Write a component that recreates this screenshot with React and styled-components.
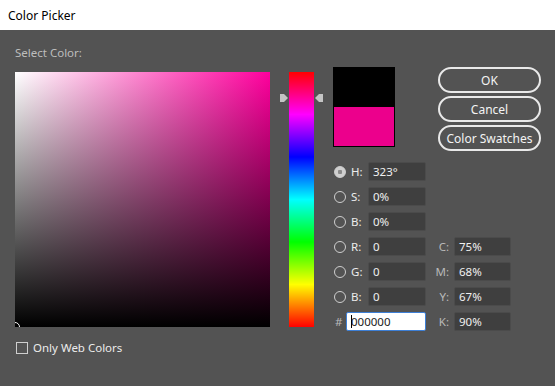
import styled, { createGlobalStyle } from 'styled-components';

const Global = createGlobalStyle`
  html, body { margin: 0; padding: 0; background: #535353; }
  body { font-family: "Noto Sans", "Open Sans", sans-serif; font-size: 11.5px; }
`;

const Window = styled.div`
  width: 555px;
  height: 386px;
  display: flex;
  flex-direction: column;
  background: #535353;
  overflow: hidden;
`;

const TitleBar = styled.div`
  height: 30px;
  flex: none;
  background: #ffffff;
  color: #000;
  display: flex;
  align-items: center;
  padding-left: 8px;
  font-size: 12px;
`;

const Body = styled.div`
  display: flex;
  padding: 0 0 0 15px;
`;

const LeftCol = styled.div`
  width: 255px;
  display: flex;
  flex-direction: column;
`;

const SectionLabel = styled.div`
  color: #bdbdbd;
  height: 42px;
  line-height: 45px;
`;

const Field = styled.div`
  position: relative;
  width: 255px;
  height: 255px;
  overflow: hidden;
  background:
    linear-gradient(to bottom, rgba(0,0,0,0), #000),
    linear-gradient(to right, #fff, ${p => p.$hue});
`;

const Marker = styled.div`
  position: absolute;
  left: -5px;
  bottom: -5px;
  width: 8px;
  height: 8px;
  border-radius: 50%;
  border: 1px solid #fff;
  box-shadow: 0 0 0 1px #000 inset;
`;

const CheckRow = styled.label`
  display: flex;
  align-items: center;
  gap: 5px;
  margin-top: 13px;
  margin-left: 1px;
  color: #ececec;
`;

const CheckBox = styled.span`
  width: 10px;
  height: 10px;
  border: 1px solid #cfcfcf;
`;

const HueCol = styled.div`
  position: relative;
  margin-left: 19px;
  margin-top: 42px;
  width: 25px;
  height: 255px;
  background: linear-gradient(to bottom,
    #ff0000 0%, #ff00ff 16.67%, #0000ff 33.33%, #00ffff 50%,
    #00ff00 66.67%, #ffff00 83.33%, #ff0000 100%);
`;

const Arrow = styled.div`
  position: absolute;
  ${p => (p.$side === 'left' ? 'left: -9px;' : 'right: -9px;')}
  width: 8px;
  height: 8px;
  background: #c4c4c4;
  clip-path: ${p => (p.$side === 'left'
    ? 'polygon(0 0, 50% 0, 100% 50%, 50% 100%, 0 100%)'
    : 'polygon(50% 0, 100% 0, 100% 100%, 50% 100%, 0 50%)')};
`;

const RightArea = styled.div`
  margin-left: 19px;
  margin-top: 37px;
  display: flex;
  flex-direction: column;
`;

const TopRow = styled.div`
  display: flex;
`;

const Swatch = styled.div`
  width: 60px;
  height: 78px;
  border: 1px solid #000;
  display: flex;
  flex-direction: column;
`;

const SwatchHalf = styled.div`
  height: 39px;
  background: ${p => p.$color};
`;

const Buttons = styled.div`
  margin-left: 43px;
  display: flex;
  flex-direction: column;
  gap: 3px;
`;

const Button = styled.button`
  width: 103px;
  height: 26px;
  box-sizing: border-box;
  border: 2px solid #e9e9e9;
  border-radius: 13px;
  background: #535353;
  color: #f4f4f4;
  font-family: inherit;
  font-size: 12px;
  padding: 0;
`;

const Grid = styled.div`
  margin-top: 11px;
  display: grid;
  grid-template-columns: 14px 21px 58px 28px 57px;
  grid-auto-rows: 19px;
  row-gap: 6px;
  align-items: center;
`;

const Radio = styled.span`
  width: 10px;
  height: 10px;
  border-radius: 50%;
  border: 1px solid #cfcfcf;
  margin-left: 1px;
  box-sizing: content-box;
  background: ${p => (p.$on ? 'radial-gradient(circle, #8a8a8a 0 2px, #cfcfcf 2.5px)' : 'transparent')};
`;

const Label = styled.span`
  color: ${p => (p.$dim ? '#b9b9b9' : '#ececec')};
  padding-left: ${p => (p.$right ? 0 : 4)}px;
  ${p => p.$right && 'text-align: right; padding-right: 5px;'}
`;

const Input = styled.div`
  height: 19px;
  box-sizing: border-box;
  background: #3f3f3f;
  border: 1px solid #4b4b4b;
  border-radius: 2px;
  color: #f0f0f0;
  padding-left: 4px;
  line-height: 17px;
`;

const HexInput = styled(Input)`
  background: #ffffff;
  border: 1px solid #3d7fd6;
  color: #222;
  margin-left: -1px;
  grid-column: span 2;
  position: relative;
`;

const Caret = styled.span`
  position: absolute;
  left: 4px;
  top: 2px;
  width: 1px;
  height: 13px;
  background: #000;
`;

const Hash = styled.span`
  color: #b9b9b9;
  margin-left: 2px;
`;

const Empty = styled.span``;

const hsv = [
  { key: 'H', value: '323°', on: true },
  { key: 'S', value: '0%' },
  { key: 'B', value: '0%' },
];
const rgb = [
  { key: 'R', value: '0', c: 'C', cv: '75%' },
  { key: 'G', value: '0', c: 'M', cv: '68%' },
  { key: 'B', value: '0', c: 'Y', cv: '67%' },
];

export default function App() {
  const hue = 323;
  const hueTop = Math.round((1 - hue / 360) * 255);
  return (
    <Window>
      <Global />
      <TitleBar>Color Picker</TitleBar>
      <Body>
        <LeftCol>
          <SectionLabel>Select Color:</SectionLabel>
          <Field $hue="#ff009d">
            <Marker />
          </Field>
          <CheckRow>
            <CheckBox />
            Only Web Colors
          </CheckRow>
        </LeftCol>
        <HueCol>
          <Arrow $side="left" style={{ top: hueTop - 4 }} />
          <Arrow $side="right" style={{ top: hueTop - 4 }} />
        </HueCol>
        <RightArea>
          <TopRow>
            <Swatch>
              <SwatchHalf $color="#000000" />
              <SwatchHalf $color="#ec008c" />
            </Swatch>
            <Buttons>
              <Button>OK</Button>
              <Button>Cancel</Button>
              <Button>Color Swatches</Button>
            </Buttons>
          </TopRow>
          <Grid>
            {hsv.map(r => (
              <>
                <Radio $on={r.on} />
                <Label>{r.key}:</Label>
                <Input>{r.value}</Input>
                <Empty />
                <Empty />
              </>
            ))}
            {rgb.map(r => (
              <>
                <Radio $on={false} />
                <Label>{r.key}:</Label>
                <Input>{r.value}</Input>
                <Label $dim $right>{r.c}:</Label>
                <Input>{r.cv}</Input>
              </>
            ))}
            <Hash>#</Hash>
            <HexInput><Caret />000000</HexInput>
            <Label $dim $right>K:</Label>
            <Input>90%</Input>
          </Grid>
        </RightArea>
      </Body>
    </Window>
  );
}
